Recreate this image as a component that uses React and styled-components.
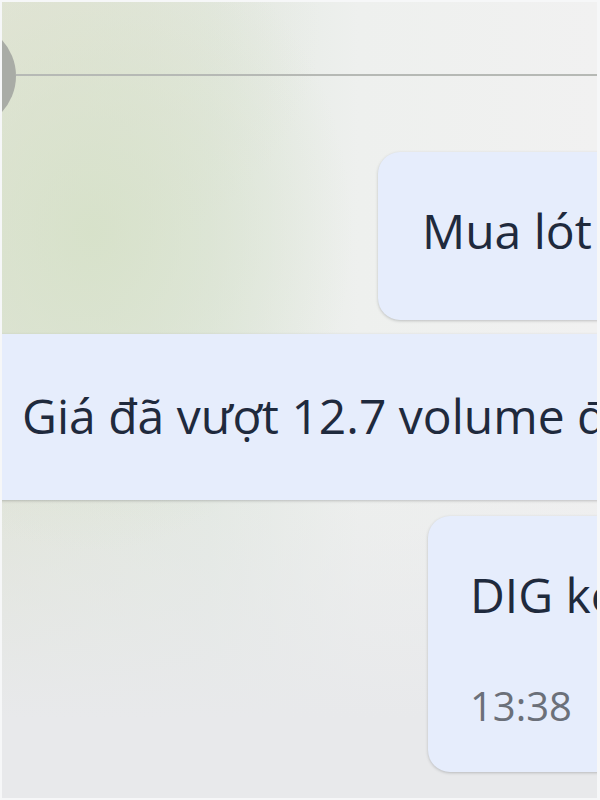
import styled, { createGlobalStyle } from "styled-components";

const GlobalStyle = createGlobalStyle`
  html, body {
    margin: 0;
    padding: 0;
    overflow: hidden;
  }
`;

const Screen = styled.div`
  width: 600px;
  height: 800px;
  box-sizing: border-box;
  overflow: hidden;
  border: 2px solid #f6f7f8;
  border-right-width: 3px;
  font-family: "Open Sans", "Noto Sans", sans-serif;
  background:
    radial-gradient(ellipse 260px 320px at 90px 230px, rgba(214, 225, 200, 0.9), rgba(214, 225, 200, 0) 100%),
    radial-gradient(ellipse 320px 260px at 0px 20px, rgba(226, 228, 214, 0.9), rgba(226, 228, 214, 0) 100%),
    linear-gradient(180deg, rgba(240, 240, 240, 0) 55%, #e8e9eb 90%),
    linear-gradient(90deg, #e0e4d8 0%, #e3e9e2 35%, #eef0ee 60%, #f1f1f1 100%);
`;

const TopBar = styled.div`
  height: 150px;
  display: flex;
  align-items: center;
`;

const Avatar = styled.div`
  flex: none;
  width: 106px;
  height: 106px;
  margin-left: -92px;
  margin-top: -2px;
  border-radius: 50%;
  background: #a9aca6;
`;

const Divider = styled.div`
  flex: 1;
  height: 2px;
  margin-top: -4px;
  background: #b6b9b5;
`;

const Thread = styled.div`
  display: flex;
  flex-direction: column;
  width: 900px;
`;

const Bubble = styled.div`
  box-sizing: border-box;
  margin-left: ${(p) => p.$left}px;
  margin-top: ${(p) => p.$gap || 0}px;
  min-height: ${(p) => p.$height}px;
  padding: ${(p) => p.$pad};
  background: #e6edfc;
  border-radius: ${(p) => (p.$incoming ? "0 22px 22px 0" : "22px")};
  box-shadow: 0 1px 3px rgba(60, 64, 67, 0.28);
  display: flex;
  flex-direction: column;
  justify-content: ${(p) => (p.$center ? "center" : "flex-start")};
`;

const Text = styled.div`
  font-size: 48px;
  line-height: 60px;
  color: #1f2a3d;
  white-space: nowrap;
`;

const Time = styled.div`
  margin-top: 56px;
  font-size: 40px;
  line-height: 50px;
  color: #6b7079;
`;

export default function App() {
  return (
    <>
      <GlobalStyle />
      <Screen>
        <TopBar>
          <Avatar />
          <Divider />
        </TopBar>
        <Thread>
          <Bubble $left={376} $height={168} $pad="0 0 10px 44px" $center>
            <Text>Mua lót thêm</Text>
          </Bubble>
          <Bubble $left={-22} $gap={14} $height={166} $pad="0 0 2px 42px" $center $incoming>
            <Text>Giá đã vượt 12.7 volume đột biến</Text>
          </Bubble>
          <Bubble $left={426} $gap={16} $height={256} $pad="49px 0 0 42px">
            <Text>DIG kéo mạnh</Text>
            <Time>13:38</Time>
          </Bubble>
        </Thread>
      </Screen>
    </>
  );
}
